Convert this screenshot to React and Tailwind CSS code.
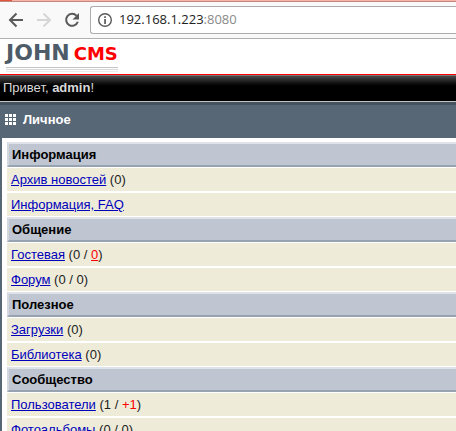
const sections = [
  {
    title: 'Информация',
    items: [
      { name: 'Архив новостей', count: '0' },
      { name: 'Информация, FAQ' },
    ],
  },
  {
    title: 'Общение',
    items: [
      { name: 'Гостевая', count: '0', extra: '0', extraLink: true },
      { name: 'Форум', count: '0', extra: '0' },
    ],
  },
  {
    title: 'Полезное',
    items: [
      { name: 'Загрузки', count: '0' },
      { name: 'Библиотека', count: '0' },
    ],
  },
  {
    title: 'Сообщество',
    items: [
      { name: 'Пользователи', count: '1', extra: '+1', isNew: true },
      { name: 'Фотоальбомы', count: '0', extra: '0' },
    ],
  },
]

function BrowserBar() {
  return (
    <div>
      <div className="flex h-[2px] border-b border-[#c08880] bg-[#f8b4a6]">
        <span className="w-3 bg-[#e0553c]" />
      </div>
      <div className="flex h-[37px] items-center border-b border-[#b0b0b0] bg-[#f9f9f9] pl-2">
        <button type="button" aria-label="Назад" className="text-[#5a5a5a]">
          <svg width="16" height="16" viewBox="0 0 16 16" fill="none" stroke="currentColor" strokeWidth="2">
            <path d="M15 8H2.5M8.5 1.5L2 8l6.5 6.5" />
          </svg>
        </button>
        <button type="button" aria-label="Вперёд" className="ml-3 text-[#d6d6d6]">
          <svg width="16" height="16" viewBox="0 0 16 16" fill="none" stroke="currentColor" strokeWidth="2">
            <path d="M1 8h12.5M7.5 1.5L14 8l-6.5 6.5" />
          </svg>
        </button>
        <button type="button" aria-label="Обновить" className="ml-3 text-[#5a5a5a]">
          <svg width="16" height="16" viewBox="0 0 16 16">
            <path d="M12.6 3.8A6 6 0 1 0 13.8 9.7" fill="none" stroke="currentColor" strokeWidth="2" />
            <path d="M15 1v6.5H8.5z" fill="currentColor" />
          </svg>
        </button>
        <div className="ml-2.5 flex h-7 flex-1 items-center rounded-l-[3px] border border-r-0 border-[#adadad] bg-white pl-1.5">
          <svg width="16" height="16" viewBox="0 0 16 16" className="shrink-0 text-[#5a5a5a]">
            <circle cx="8" cy="8" r="6.3" fill="none" stroke="currentColor" strokeWidth="1.4" />
            <path d="M7.2 4.2h1.7v1.7H7.2zM7.2 7h1.7v5H7.2z" fill="currentColor" />
          </svg>
          <p className="ml-1.5 font-['Open_Sans',sans-serif] text-[13px] text-[#222]">
            192.168.1.223<span className="text-[#8a8a8a]">:8080</span>
          </p>
        </div>
      </div>
    </div>
  )
}

function Logo() {
  return (
    <a href="#home" className="inline-block font-['DejaVu_Sans',sans-serif] font-bold">
      <span className="flex h-6 items-baseline gap-1 leading-5">
        <span className="text-[22px] leading-5 text-[#4e5b68]">JOHN</span>
        <span className="text-lg leading-5 text-[#f00]">CMS</span>
      </span>
      {/* faded reflection under the letters */}
      <span className="block h-px bg-[#c4c4c4]" />
      <span className="mt-px block h-px bg-[#d8d8d8]" />
      <span className="mt-px block h-px bg-[#ececec]" />
    </a>
  )
}

function GridIcon() {
  return (
    <svg width="11" height="11" viewBox="0 0 11 11" fill="white">
      {[0, 4, 8].map((y) =>
        [0, 4, 8].map((x) => <rect key={`${x}-${y}`} x={x} y={y} width="3" height="3" />)
      )}
    </svg>
  )
}

function MenuItem({ item }) {
  return (
    <li className="h-[23px] bg-[#eeebd9] pl-1 leading-6">
      <a href="#item" className="text-[#0000bb] underline">{item.name}</a>
      {item.count && (
        <>
          {' ('}
          {item.count}
          {item.extra && ' / '}
          {item.extraLink ? (
            <a href="#new" className="text-[#f00] underline">{item.extra}</a>
          ) : (
            <span className={item.isNew ? 'text-[#f00]' : ''}>{item.extra}</span>
          )}
          {')'}
        </>
      )}
    </li>
  )
}

function App() {
  return (
    <div className="h-screen overflow-hidden bg-white font-['Liberation_Sans',sans-serif] text-[13px] text-[#222]">
      <BrowserBar />
      <header className="h-9 border-b border-[#f00] pt-1 pl-1.5">
        <Logo />
      </header>
      <div className="h-[27px] border-t border-b border-t-[#777] border-b-[#c4c4c4] bg-black bg-linear-to-b from-[#4c4c4c] to-black to-50% pl-[3px] leading-6 text-[#d8d8d8]">
        Привет, <b>admin</b>!
      </div>
      <div className="flex h-9 items-center gap-[7px] border-t-3 border-[#46535f] bg-[#586776] pb-1 pl-[5px] font-bold text-white">
        <GridIcon />
        <h1>Личное</h1>
      </div>
      <main className="border-l-2 border-[#586776] pt-1 pl-[5px]">
        {sections.map((section) => (
          <section key={section.title} className="mb-px">
            <h2 className="mb-px h-[25px] border-2 border-r-0 border-t-[#dfe3e9] border-b-[#98a3b2] border-l-[#d3d8df] bg-[#bfc6d1] pl-[3px] leading-[22px] font-bold text-black">
              {section.title}
            </h2>
            <ul className="flex flex-col gap-0.5">
              {section.items.map((item) => (
                <MenuItem key={item.name} item={item} />
              ))}
            </ul>
          </section>
        ))}
      </main>
    </div>
  )
}

export default App
